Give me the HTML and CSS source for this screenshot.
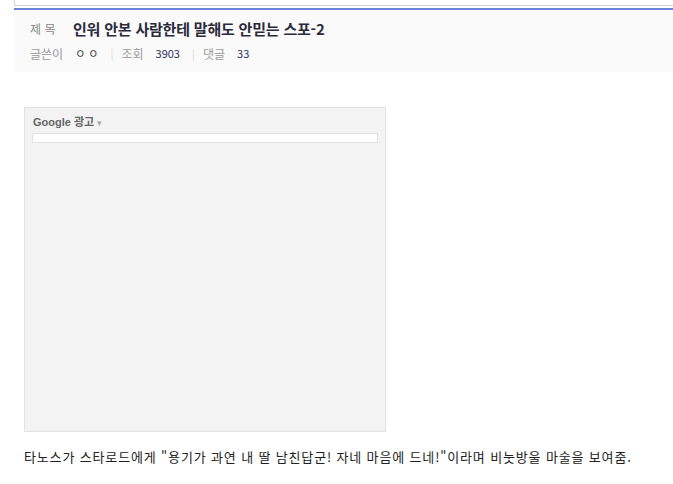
FILE: index.html
```html
<!DOCTYPE html>
<html lang="ko">
<head>
    <meta charset="UTF-8">
    <title>인워 안본 사람한테 말해도 안믿는 스포-2</title>
    <link rel="stylesheet" href="styles.css">
</head>
<body>
    <div class="top-box"></div>
    <div class="view-head">
        <div class="subject">
            <span class="label">제 목</span>
            <strong class="title">인워 안본 사람한테 말해도 안믿는 스포-2</strong>
        </div>
        <div class="meta">
            <span class="label">글쓴이</span>
            <span class="writer">ㅇ ㅇ</span>
            <span class="bar">|</span>
            <span class="label">조회</span>
            <span class="num">3903</span>
            <span class="bar">|</span>
            <span class="label">댓글</span>
            <span class="num">33</span>
        </div>
    </div>

    <div class="content">
        <div class="ad">
            <div class="ad-title">Google 광고 <span class="caret">▾</span></div>
            <div class="ad-bar"></div>
        </div>
        <p class="text">타노스가 스타로드에게 "용기가 과연 내 딸 남친답군! 자네 마음에 드네!"이라며 비눗방울 마술을 보여줌.</p>
    </div>
</body>
</html>
```

FILE: styles.css
```css
body {
    margin: 0;
    background: #fff;
    font-family: "Noto Sans CJK KR", "Noto Sans", sans-serif;
    color: #222;
}
.top-box {
    margin-left: 14px;
    height: 5px;
    border-left: 1px solid #d4d4d4;
    border-bottom: 1px solid #d4d4d4;
}
.view-head {
    margin: 2px 0 0 14px;
    border-top: 2px solid #6b85d8;
    background: #fafafa;
    height: 62px;
    padding: 0 0 0 16px;
}
.subject {
    display: flex;
    align-items: center;
    height: 20px;
    padding-top: 8px;
}
.subject .label {
    width: 43px;
    font-size: 12px;
    color: #888;
}
.title {
    font-size: 15px;
    font-weight: bold;
    color: #2b2b3d;
    letter-spacing: -0.2px;
}
.meta {
    display: flex;
    align-items: center;
    height: 18px;
    margin-top: 6px;
    font-size: 11px;
}
.meta .label {
    color: #999;
    font-size: 12px;
}
.writer {
    color: #333;
    margin-left: 12px;
    margin-right: 12px;
}
.bar {
    color: #ddd;
    margin-right: 8px;
}
.num {
    color: #2d3360;
    margin-left: 12px;
    margin-right: 12px;
}
.content {
    padding: 35px 0 0 24px;
}
.ad {
    width: 362px;
    height: 325px;
    border: 1px solid #e2e2e2;
    background: #f3f3f3;
    padding: 0 7px;
    box-sizing: border-box;
}
.ad-title {
    font-family: "Liberation Sans", "Noto Sans CJK KR", sans-serif;
    font-size: 11px;
    font-weight: bold;
    color: #666;
    padding: 5px 0 0 1px;
    height: 20px;
    box-sizing: border-box;
    height: 25px;
}
.caret {
    color: #aaa;
    font-size: 9px;
    font-weight: normal;
}
.ad-bar {
    height: 8px;
    background: #fff;
    border: 1px solid #e2e2e2;
}
.text {
    margin: 15px 0 0;
    font-size: 13px;
    color: #222;
    letter-spacing: 0.85px;
}
```
